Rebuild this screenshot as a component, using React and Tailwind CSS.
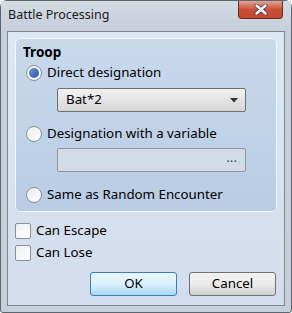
import React from "react";

const font = { fontFamily: '"Noto Sans", "Open Sans", sans-serif' };

function Radio({ checked }) {
  return (
    <div className="w-[16px] h-[16px] rounded-full border border-[#8a8f96] bg-gradient-to-br from-[#e9ecef] to-[#ffffff] flex items-center justify-center shrink-0 shadow-[inset_0_0_0_1px_#f4f6f8]">
      {checked && (
        <div className="w-[10px] h-[10px] rounded-full bg-gradient-to-br from-[#6f92d0] to-[#2c55a4]" />
      )}
    </div>
  );
}

function Check() {
  return (
    <div className="w-[16px] h-[16px] rounded-[2px] border border-[#8b9097] bg-gradient-to-br from-[#eef1f4] to-[#ffffff] shrink-0" />
  );
}

export default function App() {
  return (
    <div style={font} className="w-[292px] h-[313px] bg-[#c5cfda] rounded-t-[7px] rounded-b-[3px] border border-[#5d6670] flex flex-col text-[13.3px] text-[#000]">
      <div className="h-[30px] flex items-start justify-between pl-[7px] pr-[8px] bg-gradient-to-b from-[#d3dbe3] to-[#c5cfda]">
        <div className="pt-[5px] text-[12.5px] text-[#1a1a1a]">Battle Processing</div>
        <div className="w-[45px] h-[18px] rounded-b-[4px] border border-t-0 border-[#6b2a20] bg-gradient-to-b from-[#e3a294] via-[#c8503a] to-[#c6462f] flex items-center justify-center">
          <svg width="14" height="11" viewBox="0 0 14 11">
            <path d="M2.5 1.5 L11.5 9.5 M11.5 1.5 L2.5 9.5" stroke="#3a3f46" strokeWidth="4" strokeLinecap="round" />
            <path d="M2.5 1.5 L11.5 9.5 M11.5 1.5 L2.5 9.5" stroke="#ffffff" strokeWidth="2.4" strokeLinecap="round" />
          </svg>
        </div>
      </div>
      <div className="mx-[6px] mb-[6px] flex-1 border border-[#7f8891] bg-gradient-to-b from-[#dde8f5] to-[#d2dded] px-[7px] pt-[6px] flex flex-col">
        <div className="h-[174px] rounded-[5px] border border-[#f2f6fb] bg-gradient-to-b from-[#c9d9ec] to-[#b9cce3] pl-[10px] pr-[30px] pt-[4px] flex flex-col">
          <div className="font-bold text-[13.5px] leading-[18px] ml-[-3px]">Troop</div>
          <div className="flex items-center gap-[5px] h-[22px] mt-[1px]">
            <Radio checked />
            <span>Direct designation</span>
          </div>
          <div className="ml-[31px] mt-[4px] h-[24px] rounded-[2px] border border-[#707070] bg-gradient-to-b from-[#f2f2f2] to-[#d6d6d6] flex items-center justify-between pl-[8px] pr-[7px]">
            <span>Bat*2</span>
            <svg width="8" height="5" viewBox="0 0 8 5"><path d="M0 0 H8 L4 4.5 Z" fill="#333" /></svg>
          </div>
          <div className="flex items-center gap-[5px] h-[22px] mt-[11px]">
            <Radio />
            <span>Designation with a variable</span>
          </div>
          <div className="ml-[31px] mt-[3px] h-[24px] rounded-[2px] border border-[#8e959c] bg-[#d2dce7] flex items-center justify-end pr-[8px] text-[#444]">
            <span className="leading-none pb-[4px]">...</span>
          </div>
          <div className="flex items-center gap-[5px] h-[22px] mt-[12px]">
            <Radio />
            <span>Same as Random Encounter</span>
          </div>
        </div>
        <div className="flex items-center gap-[5px] h-[22px] mt-[8px]">
          <Check />
          <span>Can Escape</span>
        </div>
        <div className="flex items-center gap-[5px] h-[22px]">
          <Check />
          <span>Can Lose</span>
        </div>
        <div className="flex justify-end gap-[12px] mt-[8px] pr-[1px]">
          <div className="w-[87px] h-[24px] rounded-[3px] border border-[#3c7fb1] bg-gradient-to-b from-[#eaf6fd] via-[#d9f0fc] to-[#a7d9f5] flex items-center justify-center">OK</div>
          <div className="w-[87px] h-[24px] rounded-[3px] border border-[#707070] bg-gradient-to-b from-[#f2f2f2] via-[#ebebeb] to-[#cfcfcf] flex items-center justify-center">Cancel</div>
        </div>
      </div>
    </div>
  );
}
